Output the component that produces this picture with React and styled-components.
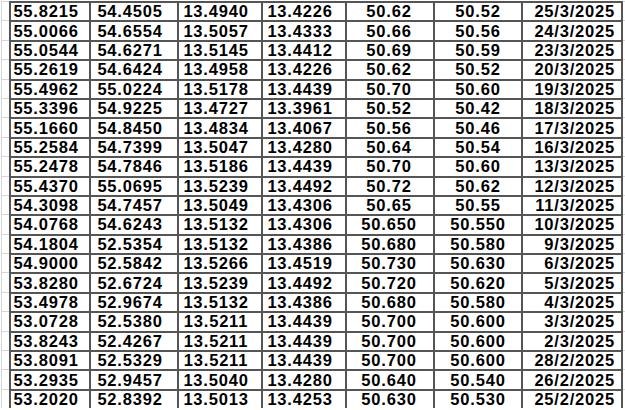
import React from 'react';
import styled, { createGlobalStyle } from 'styled-components';

const rows = [
  ['55.8215', '54.4505', '13.4940', '13.4226', '50.62', '50.52', '25/3/2025'],
  ['55.0066', '54.6554', '13.5057', '13.4333', '50.66', '50.56', '24/3/2025'],
  ['55.0544', '54.6271', '13.5145', '13.4412', '50.69', '50.59', '23/3/2025'],
  ['55.2619', '54.6424', '13.4958', '13.4226', '50.62', '50.52', '20/3/2025'],
  ['55.4962', '55.0224', '13.5178', '13.4439', '50.70', '50.60', '19/3/2025'],
  ['55.3396', '54.9225', '13.4727', '13.3961', '50.52', '50.42', '18/3/2025'],
  ['55.1660', '54.8450', '13.4834', '13.4067', '50.56', '50.46', '17/3/2025'],
  ['55.2584', '54.7399', '13.5047', '13.4280', '50.64', '50.54', '16/3/2025'],
  ['55.2478', '54.7846', '13.5186', '13.4439', '50.70', '50.60', '13/3/2025'],
  ['55.4370', '55.0695', '13.5239', '13.4492', '50.72', '50.62', '12/3/2025'],
  ['54.3098', '54.7457', '13.5049', '13.4306', '50.65', '50.55', '11/3/2025'],
  ['54.0768', '54.6243', '13.5132', '13.4306', '50.650', '50.550', '10/3/2025'],
  ['54.1804', '52.5354', '13.5132', '13.4386', '50.680', '50.580', '9/3/2025'],
  ['54.9000', '52.5842', '13.5266', '13.4519', '50.730', '50.630', '6/3/2025'],
  ['53.8280', '52.6724', '13.5239', '13.4492', '50.720', '50.620', '5/3/2025'],
  ['53.4978', '52.9674', '13.5132', '13.4386', '50.680', '50.580', '4/3/2025'],
  ['53.0728', '52.5380', '13.5211', '13.4439', '50.700', '50.600', '3/3/2025'],
  ['53.8243', '52.4267', '13.5211', '13.4439', '50.700', '50.600', '2/3/2025'],
  ['53.8091', '52.5329', '13.5211', '13.4439', '50.700', '50.600', '28/2/2025'],
  ['53.2935', '52.9457', '13.5040', '13.4280', '50.640', '50.540', '26/2/2025'],
  ['53.2020', '52.8392', '13.5013', '13.4253', '50.630', '50.530', '25/2/2025'],
];

// how each column sits in its cell
const columns = [
  { align: 'center', shift: 8 },
  { align: 'center', shift: 8 },
  { align: 'center', shift: 8 },
  { align: 'center', shift: 8 },
  { align: 'center', shift: 2 },
  { align: 'center', shift: 0 },
  { align: 'right', shift: 6 },
];

const GlobalStyle = createGlobalStyle`
  html, body {
    margin: 0;
    padding: 0;
    background: #ffffff;
    overflow: hidden;
  }
`;

const Sheet = styled.div`
  display: flex;
  flex-direction: column;
  width: 625px;
  height: 410px;
  padding-top: 1px;
  padding-left: 1px;
  box-sizing: border-box;
  overflow: hidden;
  font-family: "Liberation Sans", Arial, sans-serif;
  font-weight: bold;
  font-size: 16.5px;
  letter-spacing: 0.8px;
  color: #000;
`;

const Row = styled.div`
  display: grid;
  grid-template-columns: 8px 80px 88px 84px 84px 88px 88px 102px 1fr;
  height: 19.4px;
  flex-shrink: 0;
`;

const Gutter = styled.div`
  border-top: 1px solid #d6d6d6;
  border-left: ${(p) => (p.$side === 'left' ? '1px solid #d6d6d6' : 'none')};
`;

const Cell = styled.div`
  display: flex;
  align-items: center;
  justify-content: ${(p) => (p.$align === 'right' ? 'flex-end' : 'center')};
  padding-right: ${(p) => p.$shift}px;
  padding-bottom: 1px;
  border-top: 2px solid #555;
  border-left: 2px solid #555;
  border-right: ${(p) => (p.$last ? '2px solid #555' : 'none')};
  line-height: 16px;
  white-space: nowrap;
  box-sizing: border-box;
`;

const App = () => (
  <>
    <GlobalStyle />
    <Sheet>
      {rows.map((row) => (
        <Row key={row[6]}>
          <Gutter $side="left" />
          {row.map((value, i) => (
            <Cell
              key={i}
              $align={columns[i].align}
              $shift={columns[i].shift}
              $last={i === row.length - 1}
            >
              {value}
            </Cell>
          ))}
          <Gutter />
        </Row>
      ))}
    </Sheet>
  </>
);

export default App;
